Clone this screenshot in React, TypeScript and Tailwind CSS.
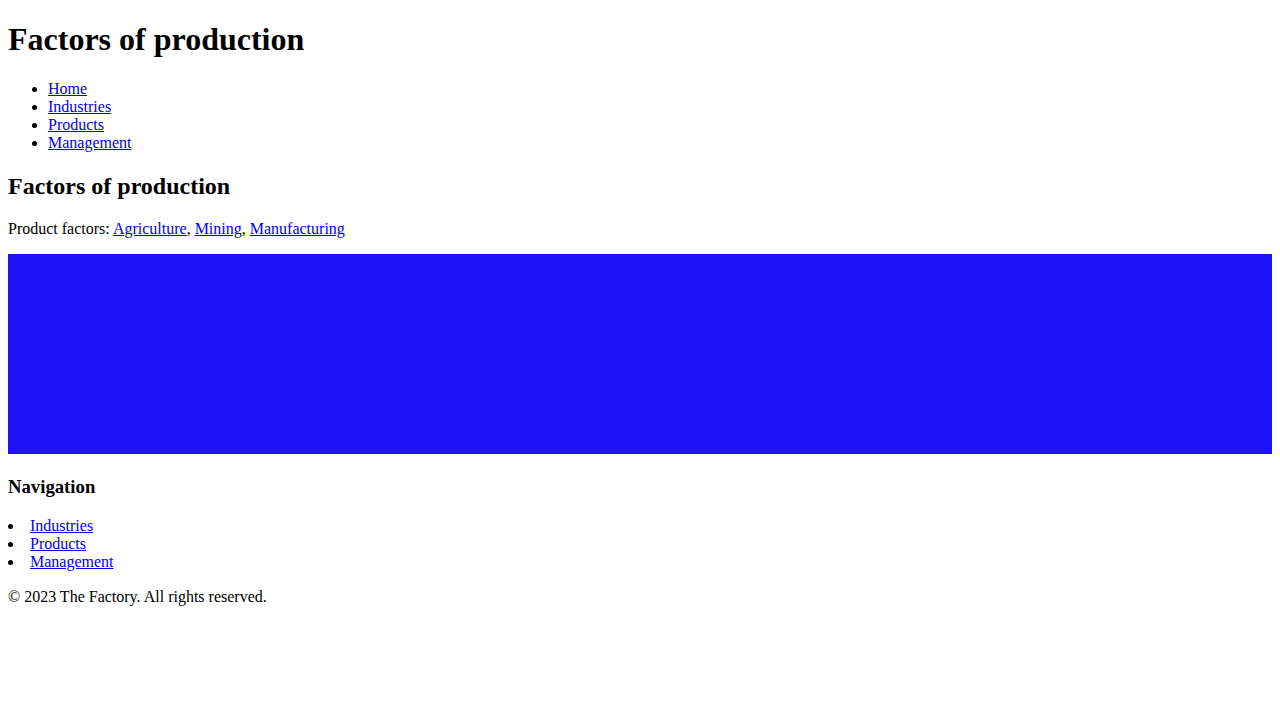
import React from 'react';

const topLinks = ['Home', 'Industries', 'Products', 'Management'];
const footerLinks = ['Industries', 'Products', 'Management'];

const App: React.FC = () => {
  return (
    <div className="px-2 font-['Liberation_Serif',serif] text-base leading-[normal] text-black bg-white min-h-[720px] flow-root">
      <header>
        <h1 className="text-[32px] font-bold my-[21.44px]">Factors of production</h1>
        <nav>
          <ul className="list-disc pl-10 my-4">
            {topLinks.map(link => (
              <li key={link}>
                <a href="#" className="text-[#0000ee] underline">{link}</a>
              </li>
            ))}
          </ul>
        </nav>
      </header>

      <main>
        <h2 className="text-[24px] font-bold mt-[20.9px] mb-[19.92px]">Factors of production</h2>
        <p className="my-4">
          Product factors:{' '}
          <a href="#" className="text-[#0000ee] underline">Agriculture</a>,{' '}
          <a href="#" className="text-[#0000ee] underline">Mining</a>,{' '}
          <a href="#" className="text-[#0000ee] underline">Manufacturing</a>
        </p>
        <div className="h-[200px] bg-[#1e12f8] mt-4" />
      </main>

      <footer>
        <h3 className="text-[18.72px] font-bold mt-[22.6px] mb-[18.72px]">Navigation</h3>
        <ul className="list-inside list-disc pl-0 mt-4 mb-[17px]">
          {footerLinks.map(link => (
            <li key={link}>
              <a href="#" className="text-[#0000ee] underline">{link}</a>
            </li>
          ))}
        </ul>
        <p className="mt-[17px] mb-4">© 2023 The Factory. All rights reserved.</p>
      </footer>
    </div>
  );
};

export default App;
